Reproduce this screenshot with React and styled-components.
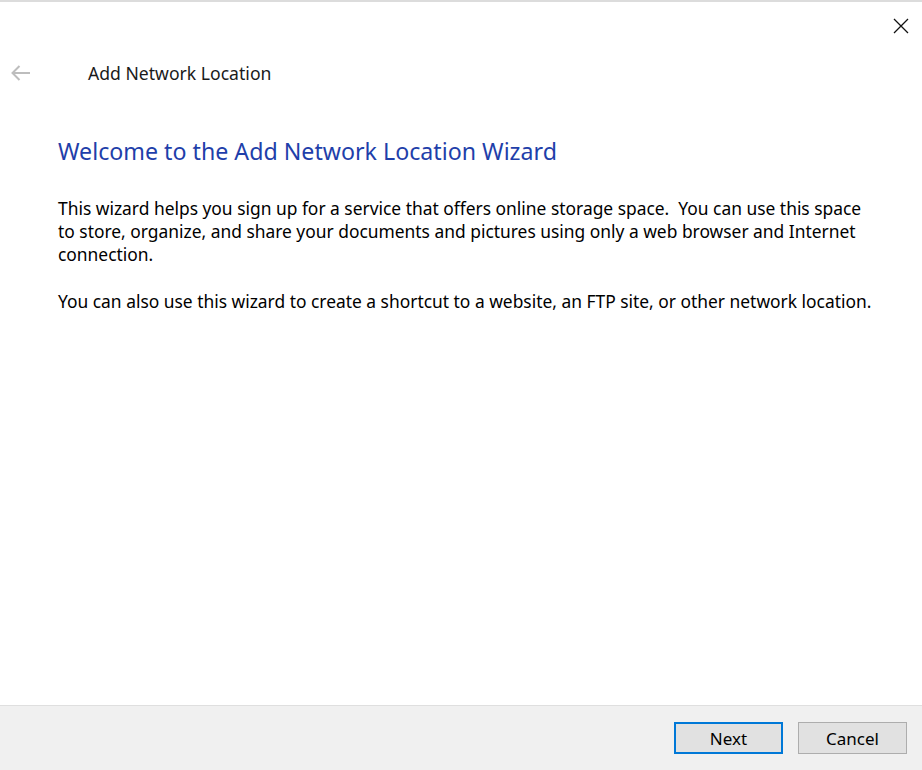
import styled, { createGlobalStyle } from "styled-components";

const GlobalStyle = createGlobalStyle`
  html, body {
    margin: 0;
    padding: 0;
    background: #fff;
  }
  #root {
    height: 100vh;
  }
`;

const Wizard = () => {
  return (
    <>
      <GlobalStyle />
      <StyledWindow>
        <StyledTitleBar>
          <StyledClose aria-label="Close">
            <svg width="16" height="16" viewBox="0 0 16 16">
              <path d="M1 1 L15 15 M15 1 L1 15" stroke="#111" strokeWidth="1.3" />
            </svg>
          </StyledClose>
        </StyledTitleBar>
        <StyledHeader>
          <StyledBack aria-label="Back">
            <svg width="20" height="18" viewBox="0 0 20 18">
              <path
                d="M20 9 H2.5 M9.5 2 L2.5 9 L9.5 16"
                stroke="#bdbdbd"
                strokeWidth="2"
                fill="none"
              />
            </svg>
          </StyledBack>
          <span>Add Network Location</span>
        </StyledHeader>
        <StyledContent>
          <h1>Welcome to the Add Network Location Wizard</h1>
          <p>
            This wizard helps you sign up for a service that offers online
            storage space.&nbsp; You can use this space to store, organize, and
            share your documents and pictures using only a web browser and
            Internet connection.
          </p>
          <p>
            You can also use this wizard to create a shortcut to a website, an
            FTP site, or other network location.
          </p>
        </StyledContent>
        <StyledFooter>
          <StyledButton $primary>Next</StyledButton>
          <StyledButton>Cancel</StyledButton>
        </StyledFooter>
      </StyledWindow>
    </>
  );
};

const StyledWindow = styled.div`
  height: 100%;
  display: flex;
  flex-direction: column;
  border-top: 2px solid #dcdcdc;
  box-sizing: border-box;
  font-family: "Noto Sans", "Open Sans", sans-serif;
  color: #000;
`;

const StyledTitleBar = styled.div`
  height: 48px;
  display: flex;
  justify-content: flex-end;
  align-items: flex-start;
`;

const StyledClose = styled.button`
  margin: 16px 13px 0 0;
  width: 16px;
  height: 16px;
  padding: 0;
  border: none;
  background: transparent;
  display: flex;
`;

const StyledHeader = styled.div`
  display: flex;
  align-items: center;
  height: 46px;
  font-size: 17.6px;
  color: #1a1a1a;
  > span {
    margin-left: 58px;
  }
`;

const StyledBack = styled.button`
  margin-left: 10px;
  padding: 0;
  border: none;
  background: transparent;
  display: flex;
`;

const StyledContent = styled.div`
  flex: 1;
  padding: 0 44px 0 58px;
  h1 {
    margin: 40px 0 31px;
    font-size: 23.2px;
    font-weight: 400;
    color: #1f3faa;
    line-height: 30px;
  }
  p {
    margin: 0 0 24px;
    font-size: 17.4px;
    line-height: 23px;
  }
`;

const StyledFooter = styled.div`
  height: 65px;
  box-sizing: border-box;
  background: #f0f0f0;
  border-top: 1px solid #dfdfdf;
  display: flex;
  justify-content: flex-end;
  align-items: center;
  gap: 15px;
  padding: 0 15px 0 0;
`;

const StyledButton = styled.button`
  width: 109px;
  height: 32px;
  box-sizing: border-box;
  background: #e1e1e1;
  border: ${(props) => (props.$primary ? "2px solid #0078d7" : "1px solid #adadad")};
  font-family: inherit;
  font-size: 17px;
  color: #000;
  padding: 0;
`;

export default Wizard;
